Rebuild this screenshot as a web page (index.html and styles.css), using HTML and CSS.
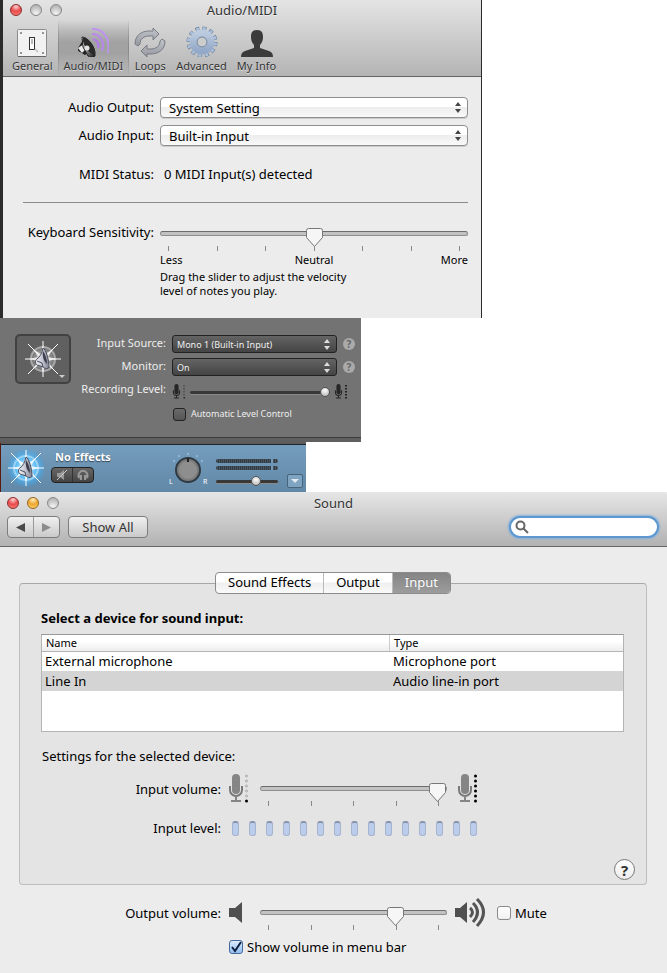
FILE: index.html
```html
<!DOCTYPE html>
<html lang="en">
<head>
  <meta charset="UTF-8">
  <meta name="viewport" content="width=device-width, initial-scale=1.0">
  <title>Sound</title>
  <link rel="stylesheet" href="styles.css">
</head>
<body>
  <!-- shared shapes -->
  <svg class="defs" aria-hidden="true">
    <defs>
      <linearGradient id="steel" x1="0" y1="0" x2="0" y2="1">
        <stop offset="0" stop-color="#c3c5cb"/><stop offset="1" stop-color="#94979f"/>
      </linearGradient>
      <linearGradient id="gearFill" x1="0" y1="0" x2="0" y2="1">
        <stop offset="0" stop-color="#bccbe0"/><stop offset="1" stop-color="#93a9c8"/>
      </linearGradient>
      <linearGradient id="cone" x1="0" y1="0" x2="1" y2="1">
        <stop offset="0" stop-color="#fff"/><stop offset="0.5" stop-color="#888"/><stop offset="1" stop-color="#111"/>
      </linearGradient>
      <linearGradient id="silver" x1="0" y1="0" x2="1" y2="0">
        <stop offset="0" stop-color="#f4f4fa"/><stop offset="0.5" stop-color="#c4c6d2"/><stop offset="1" stop-color="#7d8092"/>
      </linearGradient>
      <radialGradient id="glowBlue">
        <stop offset="0" stop-color="#fff"/><stop offset="0.5" stop-color="#5cc4ff" stop-opacity="0.9"/><stop offset="1" stop-color="#2aa6ff" stop-opacity="0"/>
      </radialGradient>
      <radialGradient id="glowWhite">
        <stop offset="0" stop-color="#fff" stop-opacity="0.7"/><stop offset="0.8" stop-color="#fff" stop-opacity="0"/>
      </radialGradient>
      <symbol id="mic" viewBox="0 0 14 29">
        <rect x="3" y="0" width="8" height="20" rx="4"/>
        <path d="M1 12v4a6 6 0 0 0 12 0v-4" fill="none" stroke="currentColor" stroke-width="2"/>
        <path d="M6 22h2v4h4v2H2v-2h4z"/>
      </symbol>
      <symbol id="speaker" viewBox="0 0 14 22">
        <path d="M0 6h6l7-6v21l-7-6H0z"/>
      </symbol>
      <symbol id="star" viewBox="0 0 36 36">
        <path d="M18 0v36M0 18h36M3 3l30 30M33 3L3 33" stroke="#fff" stroke-width="1"/>
        <path d="M18 4l2 9 8-5-5 8 9 2-9 2 5 8-8-5-2 9-2-9-8 5 5-8-9-2 9-2-5-8 8 5z" fill="#fff" fill-opacity="0.7"/>
        <circle cx="18" cy="18" r="12" fill="none" stroke="#fff" stroke-opacity="0.4" stroke-width="2"/>
        <path d="M18 7c3 1 6 12 6 19-1 2-4 2-6 0l-6-2c-2-1-2-5 0-6 3-2 5-6 6-11z" fill="url(#silver)" stroke="#4a4d5c" stroke-width="1"/>
        <path d="M18 10c2 3 4 8 4 13-3-2-5-8-4-13z" fill="#3b3e4a"/>
        <path d="M12 20l5 2 1 4" fill="none" stroke="#4a4d5c"/>
      </symbol>
    </defs>
  </svg>

  <section class="prefs">
    <header class="prefs-head">
      <div class="titlebar">
        <div class="lights">
          <button class="light red" aria-label="Close"></button>
          <button class="light" aria-label="Minimize"></button>
          <button class="light" aria-label="Zoom"></button>
        </div>
        <h1>Audio/MIDI</h1>
      </div>
      <nav class="toolbar">
        <button class="tool">
          <svg width="32" height="32" viewBox="0 0 32 32">
            <rect x="1.500" y="4.500" width="29" height="27" rx="1" fill="#f2f2f2" stroke="#8c8c8c"/>
            <path d="M2 31.500h28" stroke="#666"/>
            <circle cx="5" cy="8" r="1" fill="#777"/><circle cx="27" cy="8" r="1" fill="#777"/>
            <circle cx="5" cy="28" r="1" fill="#777"/><circle cx="27" cy="28" r="1" fill="#777"/>
            <rect x="13.500" y="12.500" width="5" height="12" fill="#fff" stroke="#333"/>
            <path d="M15 14h2v5h-2z" fill="#bbb"/><path d="M19 24l3 3" stroke="#ccc" stroke-width="2"/>
          </svg>
          General
        </button>
        <button class="tool selected">
          <svg width="32" height="32" viewBox="0 0 32 32">
            <path d="M6 15l-5 8c0 3 0 3 2 4l5 3 4-3z" fill="#222"/>
            <path d="M1 23l6-4 1 6-3 3z" fill="#e8e8e8"/>
            <path d="M5 12c5 0 14 9 13 19-2 2-5 1-7 0l-5-9z" fill="url(#cone)" stroke="#222"/>
            <ellipse cx="12" cy="21" rx="3.500" ry="10" transform="rotate(-34 12 21)" fill="#2a2a2a"/>
            <circle cx="10" cy="23" r="2.500" fill="#e4e4e4"/>
            <g fill="none" stroke-width="2">
              <path d="M16 14c5 1 6 5 5 9" stroke="#b478f4"/>
              <path d="M15 9c8 0 13 7 10 17" stroke="#b987f0"/>
              <path d="M15 4c11-1 19 10 16 24" stroke="#be93f0"/>
            </g>
          </svg>
          Audio/MIDI
        </button>
        <button class="tool">
          <svg width="32" height="32" viewBox="0 0 32 32">
            <g fill="url(#steel)" stroke="#777b84" stroke-width="1">
              <path d="M1 19C1 10 8 6 15 6h4V3l6 6-6 6v-4h-4c-5 0-9 3-9 8l-2 2z"/>
              <path d="M31 16c0 9-7 13-14 13h-4v3l-6-6 6-6v4h4c5 0 9-3 9-8l2-2z"/>
            </g>
          </svg>
          Loops
        </button>
        <button class="tool">
          <svg width="32" height="32" viewBox="0 0 32 32">
            <circle cx="16" cy="17" r="13.500" fill="none" stroke="#67809f" stroke-width="4" stroke-dasharray="4 3.070"/>
            <circle cx="16" cy="17" r="13" fill="none" stroke="#adc0da" stroke-width="4" stroke-dasharray="2.800 4.010" stroke-dashoffset="-0.600"/>
            <circle cx="16" cy="17" r="9" fill="none" stroke="url(#gearFill)" stroke-width="7"/>
            <circle cx="16" cy="17" r="5" fill="#ccc" stroke="#6b82a4"/>
          </svg>
          Advanced
        </button>
        <button class="tool">
          <svg width="32" height="32" viewBox="0 0 32 32">
            <path d="M16 5c5 0 6 3 6 7 0 3-1 6-3 8v3l9 3c3 1 4 3 4 6H0c0-3 1-5 4-6l9-3v-3c-2-2-3-5-3-8 0-4 1-7 6-7z" fill="#3b3b3b"/>
          </svg>
          My Info
        </button>
      </nav>
    </header>

    <form class="prefs-form">
      <label for="audio-output">Audio Output:</label>
      <select id="audio-output" class="popup"><option>System Setting</option></select>
      <label for="audio-input">Audio Input:</label>
      <select id="audio-input" class="popup"><option>Built-in Input</option></select>
      <span class="status-label">MIDI Status:</span>
      <span class="status">0 MIDI Input(s) detected</span>
      <hr>
      <label for="sensitivity">Keyboard Sensitivity:</label>
      <div class="sensitivity">
        <input type="range" id="sensitivity" class="slider" min="0" max="100" value="50">
        <div class="ticks"><i></i><i></i><i></i><i></i><i></i><i></i><i></i></div>
        <div class="scale"><span>Less</span><span>Neutral</span><span>More</span></div>
        <p>Drag the slider to adjust the velocity<br>level of notes you play.</p>
      </div>
    </form>
  </section>

  <section class="input-panel">
    <button class="instrument" aria-label="Instrument icon">
      <svg width="36" height="36" viewBox="0 0 36 36">
        <circle cx="18" cy="18" r="17" fill="url(#glowWhite)"/>
        <use href="#star"/>
      </svg>
      <span class="caret"></span>
    </button>
    <form class="input-form">
      <label for="source">Input Source:</label>
      <select id="source" class="dark-popup"><option>Mono 1 (Built-in Input)</option></select>
      <button type="button" class="dark-help">?</button>
      <label for="monitor">Monitor:</label>
      <select id="monitor" class="dark-popup"><option>On</option></select>
      <button type="button" class="dark-help">?</button>
      <label for="rec-level">Recording Level:</label>
      <div class="rec-level">
        <svg width="14" height="16" viewBox="0 0 28 32" class="dark-mic">
          <use href="#mic" x="0" y="0" width="18" height="30"/>
          <path d="M24 2v23" stroke="#4d4d4d" stroke-width="3" stroke-dasharray="3 3"/><path d="M23 26h3v3h-3z"/>
        </svg>
        <input type="range" id="rec-level" class="dark-slider" min="0" max="100" value="100">
        <svg width="14" height="16" viewBox="0 0 28 32" class="dark-mic">
          <use href="#mic" x="0" y="0" width="18" height="30"/>
          <path d="M24 2v28" stroke="#222" stroke-width="4" stroke-dasharray="3 3"/>
        </svg>
      </div>
      <label class="auto-level"><input type="checkbox" class="dark-check">Automatic Level Control</label>
    </form>
  </section>

  <section class="track">
    <svg width="36" height="38" viewBox="0 0 36 36">
      <circle cx="18" cy="18" r="20" fill="url(#glowBlue)"/>
      <use href="#star"/>
    </svg>
    <div class="track-name">
      <h2>No Effects</h2>
      <div class="track-buttons">
        <button aria-label="Mute track">
          <svg width="12" height="12" viewBox="0 0 12 12"><path d="M1 4h3l4-3v10L4 8H1z" fill="#999"/><path d="M1 11L11 1" stroke="#ccc"/></svg>
        </button>
        <button aria-label="Solo track">
          <svg width="12" height="12" viewBox="0 0 12 12"><path d="M2 9a4.500 5 0 1 1 8 0" fill="none" stroke="#999" stroke-width="2"/><path d="M2 6h3v5H3zM10 6H7v5h2z" fill="#999"/></svg>
        </button>
      </div>
    </div>
    <div class="pan">
      <span>L</span>
      <svg width="30" height="34" viewBox="0 0 30 34">
        <g fill="#d5e2ec"><circle cx="15" cy="2" r="0.700"/><circle cx="6" cy="4" r="0.700"/><circle cx="24" cy="4" r="0.700"/><circle cx="1" cy="9" r="0.700"/><circle cx="29" cy="9" r="0.700"/></g>
        <circle cx="15" cy="18" r="12" fill="#7c7c7c" stroke="#303a42" stroke-width="2"/>
        <circle cx="15" cy="18" r="9" fill="#8e8e8e"/>
        <path d="M15 6v4" stroke="#222" stroke-width="2"/>
      </svg>
      <span>R</span>
    </div>
    <div class="levels">
      <div class="meter"></div>
      <div class="meter"></div>
      <input type="range" class="dark-slider" min="0" max="100" value="68" aria-label="Track volume">
    </div>
    <button class="disclose" aria-label="Show automation"><span class="caret"></span></button>
  </section>

  <section class="sound">
    <header class="sound-head">
      <div class="titlebar">
        <div class="lights">
          <button class="light red" aria-label="Close"></button>
          <button class="light amber" aria-label="Minimize"></button>
          <button class="light" aria-label="Zoom"></button>
        </div>
        <h1>Sound</h1>
      </div>
      <div class="sound-tools">
        <div class="nav-buttons">
          <button aria-label="Back"><svg width="9" height="9" viewBox="0 0 9 9"><path d="M9 0v9L0 4.500z" fill="#4a4a4a"/></svg></button>
          <button aria-label="Forward"><svg width="9" height="9" viewBox="0 0 9 9"><path d="M0 0v9l9-4.500z" fill="#8c8c8c"/></svg></button>
        </div>
        <button class="show-all">Show All</button>
        <label class="search">
          <svg width="14" height="14" viewBox="0 0 14 14"><circle cx="5.500" cy="5.500" r="4" fill="none" stroke="#666" stroke-width="2"/><path d="M8 8l5 5" stroke="#666" stroke-width="2"/></svg>
          <input type="search" aria-label="Search">
        </label>
      </div>
    </header>

    <div class="sound-body">
      <div class="tabs">
        <button>Sound Effects</button>
        <button>Output</button>
        <button class="active">Input</button>
      </div>
      <div class="group">
        <h2>Select a device for sound input:</h2>
        <div class="device-list">
          <table>
            <thead><tr><th>Name</th><th>Type</th></tr></thead>
            <tbody>
              <tr><td>External microphone</td><td>Microphone port</td></tr>
              <tr class="chosen"><td>Line In</td><td>Audio line-in port</td></tr>
            </tbody>
          </table>
        </div>
        <p class="settings">Settings for the selected device:</p>
        <div class="volume-row">
          <label for="input-volume">Input volume:</label>
          <svg class="gray" width="20" height="30" viewBox="0 0 20 30">
            <use href="#mic" x="0" y="0" width="14" height="29"/>
            <g fill="none" stroke="#aaa"><circle cx="17.500" cy="2" r="1"/><circle cx="17.500" cy="7" r="1"/><circle cx="17.500" cy="12" r="1"/><circle cx="17.500" cy="17" r="1"/><circle cx="17.500" cy="22" r="1"/></g>
            <circle cx="17.500" cy="27" r="1.500" fill="#000"/>
          </svg>
          <div class="volume">
            <input type="range" id="input-volume" class="slider" min="0" max="100" value="100">
            <div class="ticks"><i></i><i></i><i></i><i></i><i></i></div>
          </div>
          <svg class="gray" width="24" height="30" viewBox="0 0 24 30">
            <use href="#mic" x="3" y="0" width="14" height="29"/>
            <g fill="#000"><circle cx="20.500" cy="2" r="1.500"/><circle cx="20.500" cy="7" r="1.500"/><circle cx="20.500" cy="12" r="1.500"/><circle cx="20.500" cy="17" r="1.500"/><circle cx="20.500" cy="22" r="1.500"/><circle cx="20.500" cy="27" r="1.500"/></g>
          </svg>
        </div>
        <div class="level-row">
          <span>Input level:</span>
          <div class="level"><i></i><i></i><i></i><i></i><i></i><i></i><i></i><i></i><i></i><i></i><i></i><i></i><i></i><i></i><i></i></div>
        </div>
        <div class="help-row"><button class="help">?</button></div>
      </div>

      <div class="output">
        <div class="volume-row">
          <label for="output-volume">Output volume:</label>
          <svg class="dark" width="14" height="30" viewBox="0 0 14 30"><use href="#speaker" x="0" y="4" width="14" height="22"/></svg>
          <div class="volume">
            <input type="range" id="output-volume" class="slider" min="0" max="100" value="75">
            <div class="ticks"><i></i><i></i><i></i><i></i><i></i></div>
          </div>
          <svg class="dark" width="32" height="30" viewBox="0 0 32 30">
            <use href="#speaker" x="-1" y="4" width="14" height="22"/>
            <g fill="none" stroke="#555" stroke-width="3">
              <path d="M15 10q5 4 0 9"/><path d="M18 5q9 9 0 19"/><path d="M22 1q13 13 0 27"/>
            </g>
          </svg>
          <label class="check"><input type="checkbox">Mute</label>
        </div>
        <label class="check menu-bar"><input type="checkbox" checked>Show volume in menu bar</label>
      </div>
    </div>
  </section>
</body>
</html>
```
FILE: styles.css
```css
* {
  box-sizing: border-box;
}
body {
  margin: 0;
  background-color: #fff;
  font-family: "Noto Sans", "Open Sans", sans-serif;
  font-size: 13px;
  line-height: 18px;
  color: #000;
}
h1, h2, p {
  margin: 0;
}
button, input, select {
  font: inherit;
  color: inherit;
  margin: 0;
}
button {
  border: none;
  padding: 0;
  background: none;
}
.defs {
  position: absolute;
  width: 0;
  height: 0;
}

/* title bars */
.titlebar {
  display: grid;
  grid-template-columns: 80px 1fr 80px;
  height: 22px;
  align-items: center;
}
.titlebar h1 {
  font-size: 13px;
  font-weight: normal;
  text-align: center;
  color: #333;
  text-shadow: 0 1px 0 #eee;
}
.lights {
  display: flex;
  gap: 8px;
  padding-left: 7px;
}
.light {
  width: 12px;
  height: 12px;
  border-radius: 50%;
  border: 1px solid #888;
  background: radial-gradient(circle at 50% 85%, #f5f5f5, #c4c4c4 60%, #aaa);
}
.light.red {
  border-color: #8b2c2c;
  background: radial-gradient(circle at 50% 15%, #ffd5d5, #e8494a 50%, #ff8a80);
}
.light.amber {
  border-color: #93621c;
  background: radial-gradient(circle at 50% 15%, #fff0c0, #efa52e 50%, #ffe27a);
}

/* Audio/MIDI window */
.prefs {
  max-width: 482px;
  border-left: 3px solid #2b2b2b;
  border-right: 1px solid #2b2b2b;
  background-color: #ececec;
  padding-bottom: 20px;
}
.prefs-head {
  border-bottom: 1px solid #666;
  background: linear-gradient(#e4e4e4, #b4b4b4);
}
.prefs-head .titlebar {
  height: 20px;
}
.toolbar {
  display: flex;
  height: 56px;
  padding-left: 4px;
}
.tool {
  display: flex;
  flex-direction: column;
  align-items: center;
  gap: 2px;
  padding: 5px 5px 0;
  font-size: 11px;
  line-height: 14px;
  color: #333;
  text-shadow: 0 1px 0 #ddd;
}
.tool.selected {
  background: linear-gradient(transparent, #a2a2a2 40%, #a2a2a2 60%, transparent);
  border: solid #999;
  border-width: 0 1px;
  border-image: linear-gradient(transparent, #888, transparent) 1;
}
.prefs-form {
  display: grid;
  grid-template-columns: 131px 1fr;
  gap: 7px 6px;
  padding: 20px 13px 0 20px;
  line-height: 21px;
}
.prefs-form label, .status-label {
  text-align: right;
  white-space: nowrap;
}
.status-label, .status {
  margin-top: 11px;
}
.status {
  padding-left: 4px;
}
.prefs-form hr {
  grid-column: span 2;
  width: 100%;
  margin: 10px 0 12px;
  border: none;
  border-top: 1px solid #8a8a8a;
}
.popup {
  appearance: none;
  width: 100%;
  height: 21px;
  padding: 0 20px 0 8px;
  border: 1px solid #8e8e8e;
  border-radius: 4px;
  box-shadow: 0 1px 0 #ccc;
  background:
    url("data:image/svg+xml,%3Csvg xmlns='http://www.w3.org/2000/svg' width='6' height='11'%3E%3Cpath d='M3 0l3 4H0zM3 11l3-4H0z' fill='%23444'/%3E%3C/svg%3E") no-repeat right 6px center,
    linear-gradient(#fff, #fff 45%, #ededed 50%, #f9f9f9);
}
.sensitivity {
  padding-top: 6px;
  font-size: 11px;
  line-height: 14px;
}
.scale {
  display: grid;
  grid-template-columns: 1fr auto 1fr;
  margin: 2px 0 3px;
}
.scale span:last-child {
  text-align: right;
}

/* pointed slider with tick marks */
.slider {
  appearance: none;
  display: block;
  width: 100%;
  height: 18px;
  padding: 0 0 8px;
  background: none;
}
.slider::-webkit-slider-runnable-track {
  height: 5px;
  border: 1px solid #8e8e8e;
  border-top-color: #6c6c6c;
  border-radius: 3px;
  background-color: #c2c2c2;
}
.slider::-webkit-slider-thumb {
  appearance: none;
  width: 17px;
  height: 19px;
  margin-top: -4px;
  background: url("data:image/svg+xml,%3Csvg xmlns='http://www.w3.org/2000/svg' width='17' height='19'%3E%3Cpath d='M2.500.5h12q2 0 2 2v7l-8 9-8-9v-7q0-2 2-2z' fill='%23f6f6f6' stroke='%23777'/%3E%3C/svg%3E") no-repeat;
}
.ticks {
  display: flex;
  justify-content: space-between;
  padding: 0 8px;
}
.ticks i {
  width: 1px;
  height: 5px;
  background-color: #888;
}

/* recording input panel */
.input-panel {
  display: flex;
  max-width: 361px;
  padding: 16px 6px 12px 15px;
  background-color: #737373;
  border-bottom: 4px solid #5f5f5f;
  box-shadow: inset 0 -1px #3c3c3c;
  color: #eee;
}
.instrument {
  position: relative;
  flex: none;
  width: 56px;
  height: 50px;
  border: 2px solid #414141;
  border-radius: 5px;
  background-color: #606060;
}
.caret {
  border: 3px solid transparent;
  border-top-color: #ccc;
  border-bottom: none;
}
.instrument .caret {
  position: absolute;
  right: 4px;
  bottom: 4px;
}
.instrument svg {
  display: block;
  margin: 0 auto;
}
.input-form {
  flex: 1;
  display: grid;
  grid-template-columns: 95px 165px 12px;
  column-gap: 6px;
  grid-auto-rows: 23px;
  font-size: 11px;
  line-height: 18px;
}
.input-form > label {
  text-align: right;
  white-space: nowrap;
}
.dark-popup {
  appearance: none;
  height: 18px;
  margin-top: 1px;
  padding: 0 14px 1px 4px;
  border: 1px solid #222;
  border-radius: 3px;
  font-size: 9px;
  color: #eee;
  background:
    url("data:image/svg+xml,%3Csvg xmlns='http://www.w3.org/2000/svg' width='6' height='11'%3E%3Cpath d='M3 0l3 4H0zM3 11l3-4H0z' fill='%23ddd'/%3E%3C/svg%3E") no-repeat right 6px center,
    linear-gradient(#646464, #444);
}
.dark-help {
  width: 12px;
  height: 12px;
  margin-top: 4px;
  border-radius: 50%;
  background-color: #aaa;
  color: #666;
  font-size: 10px;
  font-weight: bold;
  line-height: 12px;
}
.rec-level {
  grid-column: span 2;
  display: flex;
  gap: 4px;
  padding-top: 4px;
}
.dark-mic {
  flex: none;
  fill: #262626;
  color: #262626;
}
.dark-slider {
  appearance: none;
  flex: 1;
  min-width: 0;
  height: 16px;
  background: none;
}
.dark-slider::-webkit-slider-runnable-track {
  height: 3px;
  border-radius: 2px;
  background-color: #383838;
  box-shadow: 0 1px #8a8a8a;
}
.dark-slider::-webkit-slider-thumb {
  appearance: none;
  width: 10px;
  height: 10px;
  margin-top: -4px;
  border: 1px solid #555;
  border-radius: 50%;
  background: radial-gradient(circle at 50% 30%, #fff, #aaa);
}
.rec-level .dark-slider {
  max-width: 140px;
}
.input-form > .auto-level {
  grid-column: 2;
  display: flex;
  align-items: center;
  gap: 5px;
  font-size: 9px;
  padding: 0 0 1px 1px;
}
.dark-check {
  appearance: none;
  width: 13px;
  height: 13px;
  border: 1px solid #222;
  border-radius: 3px;
  background: linear-gradient(#6a6a6a, #555);
}

/* track header */
.track {
  display: flex;
  max-width: 306px;
  height: 50px;
  padding: 5px 3px 0 7px;
  border-left: 1px solid #5b1a10;
  border-top: 2px solid #5c5c5c;
  box-shadow: inset 0 1px #1d252c;
  background: linear-gradient(#759dbd, #6188a6);
  color: #fff;
}
.track > svg {
  flex: none;
}
.track h2 {
  padding-left: 4px;
  font-size: 11px;
  line-height: 16px;
  text-shadow: 0 1px 1px #345;
}
.track-name {
  width: 90px;
  margin-left: 7px;
}
.track-buttons {
  display: flex;
  width: 43px;
  margin-top: 2px;
  border: 1px solid #222;
  border-radius: 4px;
  background: linear-gradient(#666, #444);
}
.track-buttons button {
  flex: 1;
  display: flex;
  justify-content: center;
  height: 14px;
  padding-top: 1px;
}
.track-buttons button + button {
  border-left: 1px solid #333;
}
.pan {
  display: flex;
  align-items: flex-end;
  height: 37px;
  margin-left: 28px;
  font-size: 7px;
  line-height: 8px;
}
.pan span {
  width: 4px;
}
.pan svg {
  flex: none;
}
.levels {
  flex: none;
  width: 62px;
  margin-left: 9px;
  padding-top: 10px;
}
.meter {
  height: 4px;
  margin-bottom: 3px;
  border-radius: 2px;
  background: linear-gradient(90deg, transparent 55px, #739bbb 55px, #739bbb 57px, transparent 57px), repeating-linear-gradient(90deg, #2e3a44 0 1px, #4a545c 1px 2px);
}
.levels .dark-slider {
  display: block;
  width: 62px;
  height: 16px;
}
.disclose {
  display: flex;
  align-items: center;
  justify-content: center;
  width: 16px;
  height: 14px;
  margin: 25px 0 0 auto;
  border: 1px solid #46657c;
  border-radius: 2px;
  background-color: #7fa4c1;
}
.disclose .caret {
  border-width: 4px;
  border-top-color: #dfeaf2;
  border-bottom: none;
}

/* Sound window */
.sound {
  background-color: #ececec;
}
.sound-head {
  border-bottom: 1px solid #666;
  border-radius: 4px 4px 0 0;
  background: linear-gradient(#e6e6e6, #b2b2b2);
}
.sound-tools {
  display: flex;
  gap: 8px;
  height: 32px;
  padding: 2px 8px 0 7px;
}
.nav-buttons, .show-all {
  height: 22px;
  border: 1px solid #7d7d7d;
  border-radius: 4px;
  background: linear-gradient(#f0f0f0, #cacaca);
  color: #333;
}
.nav-buttons {
  display: flex;
  width: 53px;
}
.nav-buttons button {
  flex: 1;
}
.nav-buttons button + button {
  border-left: 1px solid #999;
}
.show-all {
  width: 80px;
}
.search {
  display: flex;
  align-items: center;
  gap: 4px;
  width: 150px;
  height: 22px;
  margin-left: auto;
  padding: 0 4px;
  border: 2px solid #5f97cf;
  border-radius: 11px;
  box-shadow: 0 0 2px 1px #86b2de;
  background-color: #fff;
}
.search svg {
  flex: none;
}
.search input {
  width: 100%;
  min-width: 0;
  border: none;
  outline: none;
  background: none;
}
.sound-body {
  padding: 25px 20px 17px 19px;
}
.tabs {
  position: relative;
  display: flex;
  width: max-content;
  height: 22px;
  margin: 0 auto -11px;
  border: 1px solid #8c8c8c;
  border-radius: 4px;
  overflow: hidden;
  background: linear-gradient(#fff, #fff 45%, #efefef 50%, #fafafa);
}
.tabs button {
  padding: 0 12px 2px;
}
.tabs button + button {
  border-left: 1px solid #bbb;
}
.tabs .active {
  background: linear-gradient(#858585, #9c9c9c);
  color: #fff;
  text-shadow: 0 -1px #777;
}
.group {
  padding-top: 25px;
  border: 1px solid #bdbdbd;
  border-top-color: #a8a8a8;
  border-radius: 4px;
  background-color: #e4e4e4;
}
.group h2 {
  padding-left: 21px;
  font-size: 13px;
  line-height: 18px;
}
.device-list {
  height: 98px;
  margin: 7px 22px 0 21px;
  border: 1px solid #b4b4b4;
  border-top-color: #999;
  background-color: #fff;
}
table {
  width: 100%;
  border-collapse: collapse;
  table-layout: fixed;
}
th, td {
  padding: 0 4px 0 3px;
  text-align: left;
  font-weight: normal;
}
th {
  height: 16px;
  padding-left: 4px;
  font-size: 11px;
  line-height: 14px;
  border-bottom: 1px solid #b4b4b4;
  background: linear-gradient(#fff, #fff 40%, #ededed);
}
th:first-child {
  width: 347px;
}
th + th {
  padding-left: 5px;
  box-shadow: inset 1px 0 #ccc;
}
td {
  height: 20px;
}
td + td {
  padding-left: 4px;
}
.chosen {
  background-color: #d4d4d4;
}
.settings {
  margin: 15px 0 9px;
  padding-left: 22px;
}
.volume-row {
  display: grid;
  grid-template-columns: 180px 23px 187px 34px auto;
  justify-content: start;
  column-gap: 8px;
  height: 32px;
  padding-left: 21px;
}
.volume-row > label {
  padding-top: 6px;
  text-align: right;
}
.volume {
  padding-top: 9px;
}
.gray {
  fill: #858585;
  color: #7a7a7a;
}
.dark {
  fill: #505050;
}
.level-row {
  display: flex;
  gap: 11px;
  margin-top: 13px;
  padding-left: 21px;
}
.level-row span {
  width: 180px;
  text-align: right;
}
.level {
  display: flex;
  gap: 10px;
  padding-top: 2px;
}
.level i {
  width: 7px;
  height: 15px;
  border: 1px solid #a5b4d0;
  border-top: 2px solid #8894ad;
  border-radius: 3px;
  background-color: #bccdec;
}
.help-row {
  display: flex;
  justify-content: flex-end;
  padding: 22px 11px 4px 0;
}
.help {
  width: 21px;
  height: 21px;
  border: 1px solid #777;
  border-radius: 50%;
  background: linear-gradient(#fff, #ececec);
  font-size: 15px;
  font-weight: bold;
  color: #333;
}
.output {
  padding: 13px 0 0 1px;
}
.check {
  display: flex;
  align-items: flex-start;
  gap: 4px;
}
.check input {
  appearance: none;
  flex: none;
  width: 14px;
  height: 14px;
  margin-top: 2px;
  border: 1px solid #8a8a8a;
  border-radius: 3px;
  background: linear-gradient(#fff, #f0f0f0);
}
.check input:checked {
  border-color: #4a6a9c;
  background:
    url("data:image/svg+xml,%3Csvg xmlns='http://www.w3.org/2000/svg' width='12' height='12'%3E%3Cpath d='M2 6l3 4 6-9' fill='none' stroke='%23102040' stroke-width='2'/%3E%3C/svg%3E") no-repeat center,
    linear-gradient(#dcecfb, #8fbdee);
}
.menu-bar {
  width: max-content;
  margin: 8px 0 0 209px;
}
```
